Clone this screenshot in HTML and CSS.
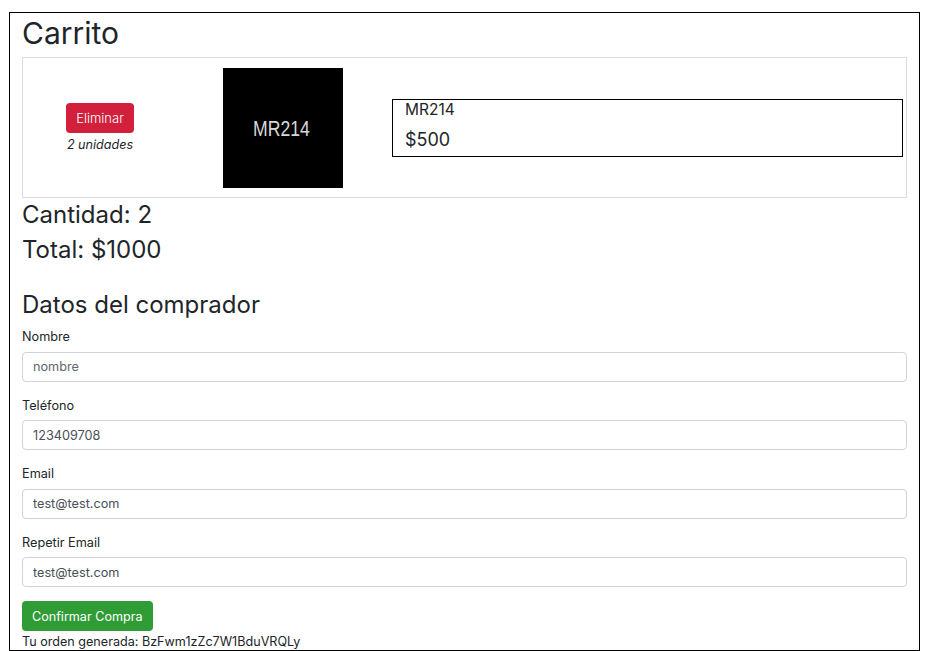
FILE: index.html
```html
<!DOCTYPE html>
<html lang="es">
<head>
<meta charset="utf-8">
<title>Carrito</title>
<link rel="stylesheet" href="styles.css">
</head>
<body>
<div class="page">
  <h1 class="title">Carrito</h1>
  <div class="card">
    <div class="actions">
      <button class="btn btn-danger">Eliminar</button>
      <em class="units">2 unidades</em>
    </div>
    <div class="thumb"><span class="thumb-text">MR214</span></div>
    <div class="info">
      <div class="info-name">MR214</div>
      <div class="info-price">$500</div>
    </div>
  </div>
  <h4 class="summary">Cantidad: 2</h4>
  <h4 class="summary">Total: $1000</h4>
  <h3 class="subtitle">Datos del comprador</h3>
  <form class="form">
    <div class="group">
      <label class="label">Nombre</label>
      <input class="input" type="text" placeholder="nombre">
    </div>
    <div class="group">
      <label class="label">Teléfono</label>
      <input class="input" type="text" value="123409708">
    </div>
    <div class="group">
      <label class="label">Email</label>
      <input class="input" type="text" value="test@test.com">
    </div>
    <div class="group">
      <label class="label">Repetir Email</label>
      <input class="input" type="text" value="test@test.com">
    </div>
    <button type="button" class="btn btn-success">Confirmar Compra</button>
  </form>
  <p class="order">Tu orden generada: BzFwm1zZc7W1BduVRQLy</p>
</div>
</body>
</html>
```
FILE: styles.css
```css
* { box-sizing: border-box; }
html, body { margin: 0; padding: 0; background: #fff; }
body {
  font-family: Inter, "Liberation Sans", Arial, sans-serif;
  color: #212529;
  font-size: 13px;
}
.page {
  margin: 12px 18px 0 9px;
  border: 1px solid #000;
  padding: 0 12px 3px 12px;
  height: 639px;
  overflow: hidden;
}
.title {
  font-size: 30px;
  font-weight: 400;
  line-height: 36px;
  margin: 2px 0 6px 0;
}
.card {
  display: flex;
  align-items: center;
  border: 1px solid #dcdcdc;
  padding: 10px 3px 9px 0;
  height: 141px;
}
.actions {
  display: flex;
  flex-direction: column;
  align-items: center;
  margin-left: 43px;
  width: 68px;
}
.btn {
  font-family: inherit;
  font-size: 13px;
  border: none;
  border-radius: 4px;
  color: #fff;
  height: 30px;
  padding: 0 10px;
  cursor: pointer;
}
.btn-danger { background: #d21f3c; width: 68px; padding: 0; font-weight: 300; }
.units {
  font-size: 12.6px;
  line-height: 19px;
  margin-top: 2px;
  color: #212529;
}
.thumb {
  width: 120px;
  height: 120px;
  background: #000;
  margin-left: 89px;
  display: flex;
  align-items: center;
  justify-content: center;
}
.thumb-text {
  font-family: "Liberation Sans", Arial, sans-serif;
  color: #d9d9d9;
  font-size: 22px;
  display: inline-block;
  transform: scaleX(0.8);
  margin-top: 2px;
  margin-right: 3px;
}
.info {
  flex: 1;
  margin-left: 49px;
  border: 1px solid #000;
  height: 58px;
  padding: 0 12px;
}
.info-name {
  font-size: 15.5px;
  line-height: 19px;
}
.info-price {
  font-size: 18px;
  line-height: 22px;
  margin-top: 10px;
}
.summary {
  font-size: 24px;
  font-weight: 400;
  line-height: 29px;
  margin: 2px 0 6px 0;
}
.subtitle {
  font-size: 24px;
  font-weight: 400;
  line-height: 29px;
  margin: 26px 0 8px 0;
}
.group { margin-bottom: 14px; }
.label {
  display: block;
  font-size: 12.7px;
  line-height: 19.5px;
  margin-bottom: 5px;
}
.input {
  display: block;
  width: 100%;
  height: 30px;
  border: 1px solid #ced4da;
  border-radius: 4px;
  padding: 0 10px;
  font-family: inherit;
  font-size: 12.7px;
  color: #495057;
  background: #fff;
}
.input::placeholder { color: #5f666d; opacity: 1; }
.btn-success {
  background: #2f9c35;
  margin-top: 0;
  font-size: 12.6px;
  padding: 0 10px;
}
.order {
  margin: 2px 0 0 0;
  font-size: 12.6px;
  line-height: 17px;
}
```
